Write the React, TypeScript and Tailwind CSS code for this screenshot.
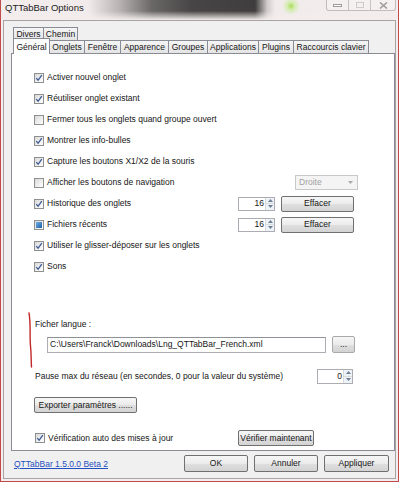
import React from "react";

type CheckState = "on" | "off" | "mixed";

function Check({ state = "on" }: { state?: CheckState }) {
  return (
    <span className="flex h-[10px] w-[10px] shrink-0 items-center justify-center border border-[#8e8f8f] bg-[linear-gradient(135deg,#d9d9d9,#ffffff)]">
      {state === "on" && (
        <svg width="8" height="8" viewBox="0 0 8 8">
          <path d="M1.3 4.1 L3.1 6.3 L6.8 1.1" fill="none" stroke="#3b5895" strokeWidth="1.3" />
        </svg>
      )}
      {state === "mixed" && (
        <span className="h-[6px] w-[6px] bg-[linear-gradient(135deg,#6fb2e6,#1c5ea6)]" />
      )}
    </span>
  );
}

function Btn({ children, className = "" }: { children: React.ReactNode; className?: string }) {
  return (
    <div
      className={
        "flex shrink-0 items-center justify-center rounded-[2px] border border-[#707070] bg-[linear-gradient(#f6f6f6_0%,#ebebeb_50%,#dfdfdf_51%,#d3d3d3_100%)] text-[#151515] " +
        className
      }
    >
      {children}
    </div>
  );
}

function Spin({ value, className = "" }: { value: string; className?: string }) {
  return (
    <div className={"flex shrink-0 border border-[#abadb3] bg-white " + className}>
      <span className="flex flex-1 items-center justify-end pr-[1px]">{value}</span>
      <span className="flex w-[9px] flex-col border-l border-[#d9d9d9]">
        <span className="flex flex-1 items-center justify-center border-b border-[#dcdcdc] bg-[#eef3f8]">
          <svg width="5" height="3" viewBox="0 0 5 3">
            <path d="M0 3 L2.5 0 L5 3 Z" fill="#6d7f95" />
          </svg>
        </span>
        <span className="flex flex-1 items-center justify-center bg-[#eef3f8]">
          <svg width="5" height="3" viewBox="0 0 5 3">
            <path d="M0 0 L2.5 3 L5 0 Z" fill="#6d7f95" />
          </svg>
        </span>
      </span>
    </div>
  );
}

const rows: { label: string; state: CheckState; extra?: "drop" | "clear" }[] = [
  { label: "Activer nouvel onglet", state: "on" },
  { label: "Réutiliser onglet existant", state: "on" },
  { label: "Fermer tous les onglets quand groupe ouvert", state: "off" },
  { label: "Montrer les info-bulles", state: "on" },
  { label: "Capture les boutons X1/X2 de la souris", state: "on" },
  { label: "Afficher les boutons de navigation", state: "off", extra: "drop" },
  { label: "Historique des onglets", state: "on", extra: "clear" },
  { label: "Fichiers récents", state: "mixed", extra: "clear" },
  { label: "Utiliser le glisser-déposer sur les onglets", state: "on" },
  { label: "Sons", state: "on" },
];

const backTabs = [
  { name: "Divers", w: "w-[31px]" },
  { name: "Chemin", w: "w-[35px]" },
];

const frontTabs = [
  { name: "Onglets", w: "w-[36px]" },
  { name: "Fenêtre", w: "w-[37px]" },
  { name: "Apparence", w: "w-[49px]" },
  { name: "Groupes", w: "w-[40px]" },
  { name: "Applications", w: "w-[52px]" },
  { name: "Plugins", w: "w-[36px]" },
  { name: "Raccourcis clavier", w: "w-[76px]" },
];

export default function App() {
  return (
    <div className="h-[485px] w-[400px] overflow-hidden bg-white font-['Liberation_Sans',Arial,sans-serif] text-[8.5px] text-[#161616]">
      <div className="flex h-[482px] w-[399px] flex-col border-b border-l border-r border-[#c24a4a] bg-[#f3eded]">
        {/* title bar */}
        <div className="flex h-[20px] shrink-0 items-start bg-[radial-gradient(circle_at_290px_6px,#a9dc5a_0px,#d6ecb4_4px,transparent_9px),linear-gradient(180deg,transparent_55%,#f3eded_100%),linear-gradient(90deg,#f3eded_0%,#f1ebeb_22%,#b7b1b1_30%,#6a6767_38%,#474545_48%,#3f3d3d_64%,#cfc9c9_67%,#f1ebeb_69%,#f3eded_100%)]">
          <span className="pl-[4px] pt-[2px] text-[9.5px] leading-[12px] text-[#1c1c1c]">QTTabBar Options</span>
          <div className="ml-auto mr-[2px] flex h-[11px] items-stretch overflow-hidden rounded-b-[3px] border border-t-0 border-[#c4bcbc] bg-[#f6f2f2]/70">
            <span className="flex w-[22px] items-center justify-center border-r border-[#c9c2c2]">
              <span className="h-[3px] w-[9px] border border-[#9d9999] bg-white" />
            </span>
            <span className="flex w-[22px] items-center justify-center border-r border-[#c9c2c2]">
              <span className="h-[6px] w-[8px] border border-[#cfcaca]" />
            </span>
            <span className="flex w-[24px] items-center justify-center">
              <svg width="9" height="7" viewBox="0 0 9 7">
                <path d="M1 0.5 L8 6.5 M8 0.5 L1 6.5" stroke="#a39e9e" strokeWidth="1.6" />
              </svg>
            </span>
          </div>
        </div>

        {/* client area */}
        <div className="mx-[2px] flex h-[459px] shrink-0 flex-col border border-[#aaa3a3] bg-[#f0f0f0]">
          {/* tabs */}
          <div className="ml-[9px] mt-[6px] flex h-[13px]">
            {backTabs.map((t, i) => (
              <div
                key={t.name}
                className={
                  "flex h-[13px] items-center justify-center border border-b-0 border-[#898c95] bg-[linear-gradient(#f5f5f5,#e4e4e4)] " +
                  t.w +
                  (i > 0 ? " -ml-px" : "")
                }
              >
                {t.name}
              </div>
            ))}
          </div>
          <div className="ml-[9px] flex h-[13px] items-end">
            <div className="relative z-10 -mb-px -mt-[3px] flex h-[16px] w-[37px] items-start justify-center border border-b-0 border-[#898c95] bg-white pt-[2px]">
              Général
            </div>
            {frontTabs.map((t) => (
              <div
                key={t.name}
                className={
                  "-ml-px flex h-[13px] items-center justify-center border border-b-0 border-[#898c95] bg-[linear-gradient(#f5f5f5,#e4e4e4)] " +
                  t.w
                }
              >
                {t.name}
              </div>
            ))}
          </div>

          {/* panel */}
          <div className="relative ml-[7px] flex h-[398px] w-[384px] flex-col border border-[#898c95] bg-white">
            <div className="flex flex-col pt-[13px]">
              {rows.map((r) => (
                <div key={r.label} className="flex h-[21px] items-center pl-[22px]">
                  <Check state={r.state} />
                  <span className="ml-[3px]">{r.label}</span>
                  {r.extra === "drop" && (
                    <div className="ml-auto mr-[36px] flex h-[15px] w-[63px] items-center border border-[#c9c9c9] bg-[#f4f4f4] pl-[3px] text-[#a2a2a2]">
                      Droite
                      <svg className="ml-auto mr-[4px]" width="5" height="3" viewBox="0 0 5 3">
                        <path d="M0 0 L2.5 3 L5 0 Z" fill="#a8a8a8" />
                      </svg>
                    </div>
                  )}
                  {r.extra === "clear" && (
                    <div className="ml-auto mr-[40px] flex items-center">
                      <Spin value="16" className="h-[14px] w-[37px]" />
                      <Btn className="ml-[6px] h-[16px] w-[73px]">Effacer</Btn>
                    </div>
                  )}
                </div>
              ))}
            </div>

            <div className="mt-[40px] flex h-[14px] items-center pl-[23px]">Ficher langue :</div>
            <div className="mt-[5px] flex h-[17px] items-center pl-[35px]">
              <div className="flex h-[16px] w-[279px] items-center border border-[#abadb3] border-t-[#8e9198] bg-white pl-[2px]">
                {"C:\\Users\\Franck\\Downloads\\Lng_QTTabBar_French.xml"}
              </div>
              <Btn className="ml-[6px] h-[17px] w-[23px] border-[#a9a9a9] text-[#8a8a8a]">...</Btn>
            </div>

            <div className="mt-[15px] flex h-[16px] items-center pl-[23px]">
              <span>Pause max du réseau (en secondes, 0 pour la valeur du système)</span>
              <Spin value="0" className="ml-auto mr-[41px] h-[15px] w-[36px]" />
            </div>

            <div className="mt-[13px] flex pl-[22px]">
              <Btn className="h-[16px] w-[103px]">Exporter paramètres ......</Btn>
            </div>

            <div className="mt-[17px] flex h-[16px] items-center pl-[23px]">
              <Check state="on" />
              <span className="ml-[3px]">Vérification auto des mises à jour</span>
              <Btn className="ml-auto mr-[80px] h-[16px] w-[76px]">Vérifier maintenant</Btn>
            </div>

            {/* hand-drawn annotation */}
            <svg className="absolute left-[14px] top-[258px]" width="8" height="56" viewBox="0 0 8 56">
              <path d="M3 1 C 5 12, 3.5 24, 4.5 34 S 5 48, 5.5 55" fill="none" stroke="#c2282a" strokeWidth="1.4" strokeLinecap="round" />
            </svg>
          </div>

          {/* bottom bar */}
          <div className="flex h-[27px] items-start pl-[10px] pr-[6px] pt-[4px]">
            <span className="mt-[3px] text-[#1f4fc0] underline">QTTabBar 1.5.0.0 Beta 2</span>
            <Btn className="ml-auto h-[17px] w-[64px]">OK</Btn>
            <Btn className="ml-[6px] h-[17px] w-[64px]">Annuler</Btn>
            <Btn className="ml-[6px] h-[17px] w-[65px]">Appliquer</Btn>
          </div>
        </div>
      </div>
    </div>
  );
}
